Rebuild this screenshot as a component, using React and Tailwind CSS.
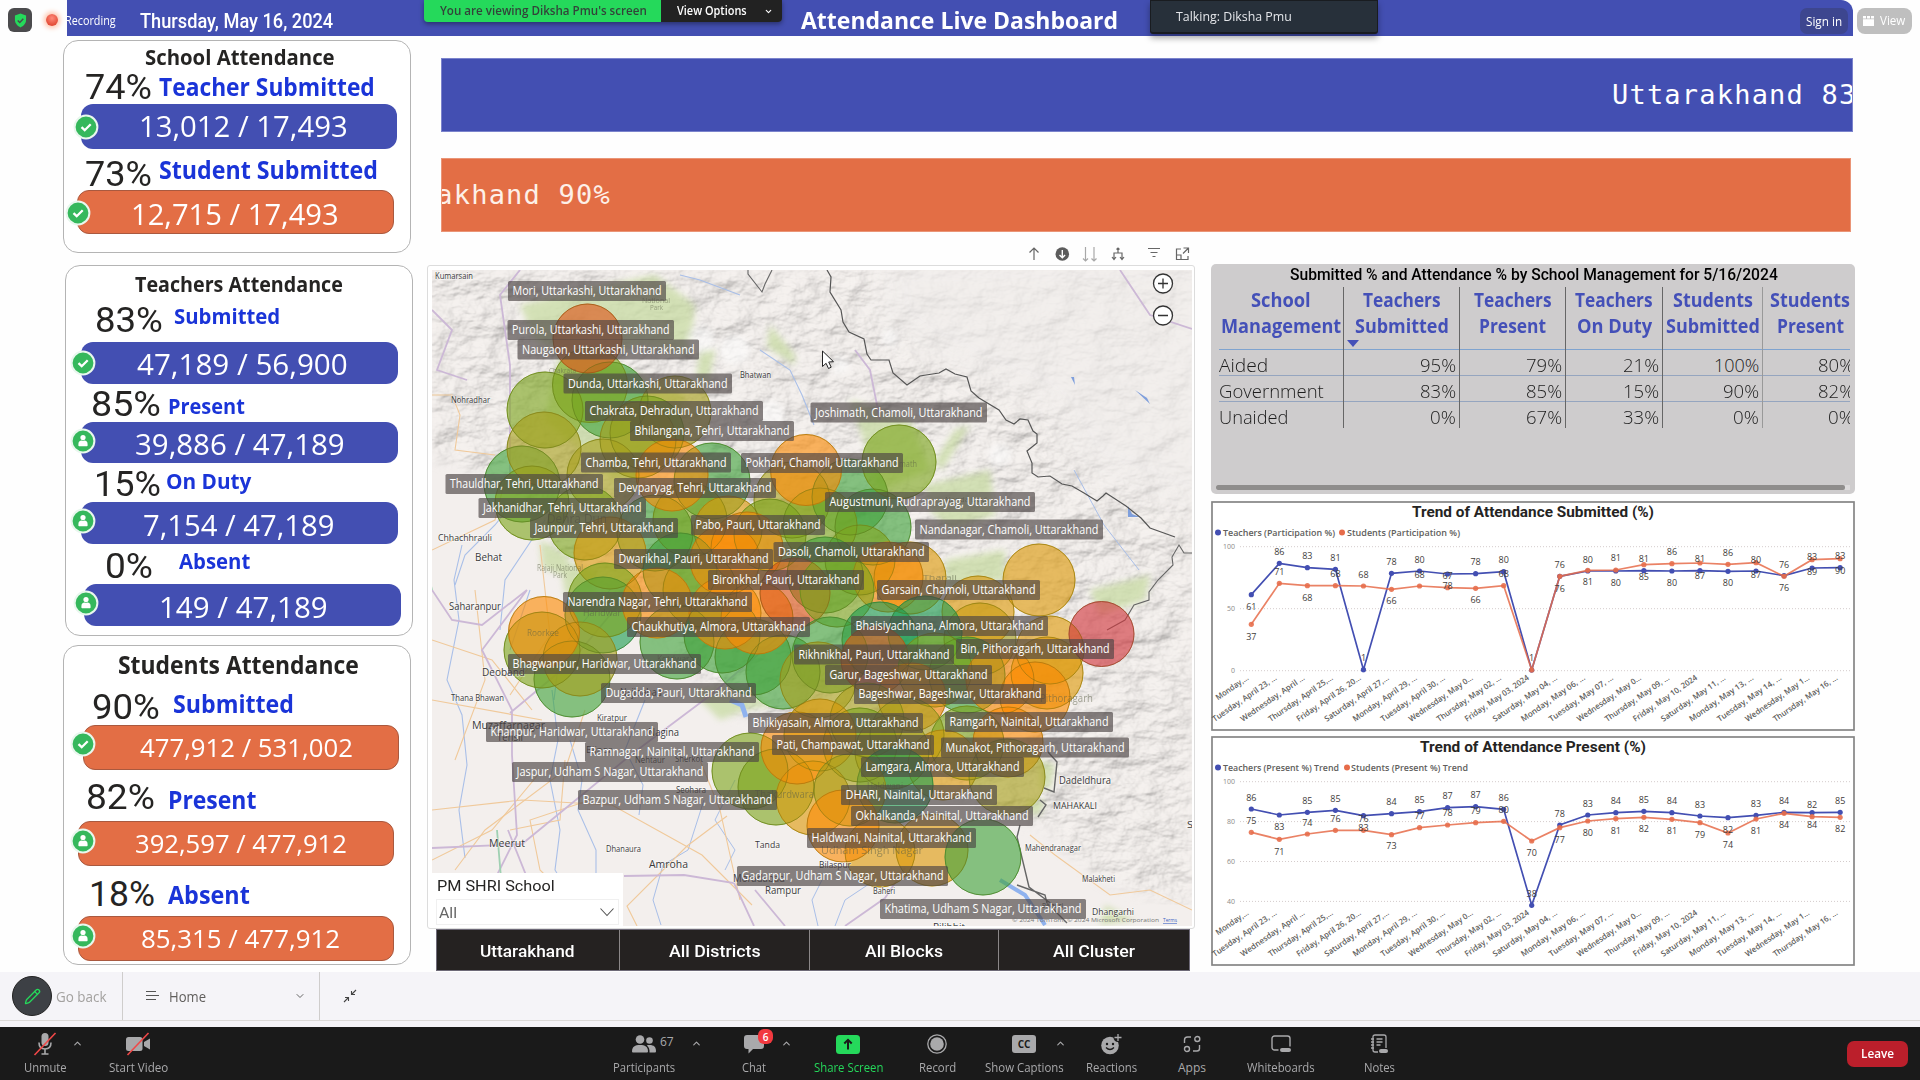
import React, { useLayoutEffect, useRef, useState } from "react";
import { ChevronDown, ChevronUp, Pencil } from "lucide-react";

const SANS = "font-['Open_Sans','Noto_Sans',sans-serif]";
const DIN = "font-['Roboto','Liberation_Sans',sans-serif]";

/* One line of text, squeezed or stretched to the width of its box. */
function Fit({ className = "", children }) {
  const box = useRef(null);
  const text = useRef(null);
  const [scale, setScale] = useState(1);
  useLayoutEffect(() => {
    setScale(box.current.clientWidth / text.current.offsetWidth);
  }, []);
  return (
    <div ref={box} className={`shrink-0 ${className}`}>
      <span ref={text} className="inline-block origin-left whitespace-nowrap" style={{ transform: `scaleX(${scale})` }}>
        {children}
      </span>
    </div>
  );
}

function Badge({ kind, className }) {
  return (
    <svg viewBox="0 0 26 26" className={`absolute h-[26px] w-[26px] ${className}`}>
      <circle cx="13" cy="13" r="11.4" fill="#35b85c" stroke="#e9f7ee" strokeWidth="2" />
      {kind === "check" ? (
        <path d="M8.5 13.2l3.2 3 6-6" fill="none" stroke="#fff" strokeWidth="2.3" />
      ) : (
        <g fill="#fff">
          <circle cx="13" cy="9.6" r="2.6" />
          <path d="M8.4 16.2q0-3.6 3.4-3.6 1.2.9 2.4 0 3.4 0 3.4 3.6v1.3q0 .7-.7.7H9.1q-.7 0-.7-.7z" />
        </g>
      )}
    </svg>
  );
}

function Metric({ m }) {
  return (
    <>
      <div className={`flex items-start ${m.row}`}>
        <Fit className={`${DIN} h-[25px] text-[35.5px] leading-[25px] text-[#252423] ${m.pctCls}`}>{m.pct}</Fit>
        <Fit className={`font-bold text-[#1a34d8] ${m.labelCls}`}>{m.label}</Fit>
      </div>
      <div className={`relative flex items-start rounded-[12px] ${m.bar}`}>
        <Fit className={`text-white ${m.valueCls}`}>{m.value}</Fit>
        <Badge kind={m.kind} className={m.badge} />
      </div>
    </>
  );
}

const BLUE = "bg-[#434fb2]";
const ORANGE = "bg-[#e36e45] border border-[#a9593f]";

const cards = [
  {
    cls: "h-[213px]",
    title: "School Attendance",
    titleCls: "ml-[81px] mt-[8px] h-[16px] w-[190px] text-[21.5px] leading-[16px]",
    metrics: [
      { pct: "74%", label: "Teacher Submitted", value: "13,012 / 17,493", kind: "check", row: "h-[39px]", pctCls: "ml-[21px] mt-[10px] w-[67px]", labelCls: "ml-[7px] mt-[12px] h-[18px] w-[216px] text-[25px] leading-[18px]", bar: `ml-[17px] h-[45px] w-[316px] ${BLUE}`, valueCls: "ml-[58px] mt-[11px] h-[22px] w-[209px] text-[30px] leading-[22px]", badge: "left-[-8px] top-[10px]" },
      { pct: "73%", label: "Student Submitted", value: "12,715 / 17,493", kind: "check", row: "h-[41px]", pctCls: "ml-[21px] mt-[13px] w-[67px]", labelCls: "ml-[7px] mt-[11px] h-[18px] w-[219px] text-[25px] leading-[18px]", bar: `ml-[13px] h-[44px] w-[317px] ${ORANGE}`, valueCls: "ml-[53px] mt-[12px] h-[22px] w-[208px] text-[30px] leading-[22px]", badge: "left-[-13px] top-[9px]" },
    ],
  },
  {
    cls: "ml-[2px] mt-[12px] h-[371px]",
    title: "Teachers Attendance",
    titleCls: "ml-[69px] mt-[10px] h-[16px] w-[208px] text-[21.5px] leading-[15px]",
    metrics: [
      { pct: "83%", label: "Submitted", value: "47,189 / 56,900", kind: "check", row: "h-[50px]", pctCls: "ml-[29px] mt-[16px] w-[68px]", labelCls: "ml-[11px] mt-[16px] h-[15px] w-[106px] text-[21.5px] leading-[15px]", bar: `ml-[15px] h-[42px] w-[317px] ${BLUE}`, valueCls: "ml-[56px] mt-[11px] h-[22px] w-[211px] text-[30px] leading-[22px]", badge: "left-[-11px] top-[8px]" },
      { pct: "85%", label: "Present", value: "39,886 / 47,189", kind: "user", row: "h-[38px]", pctCls: "ml-[25px] mt-[8px] w-[70px]", labelCls: "ml-[7px] mt-[14px] h-[15px] w-[77px] text-[21.5px] leading-[15px]", bar: `ml-[15px] h-[41px] w-[317px] ${BLUE}`, valueCls: "ml-[54px] mt-[11px] h-[22px] w-[210px] text-[30px] leading-[22px]", badge: "left-[-11px] top-[6px]" },
      { pct: "15%", label: "On Duty", value: "7,154 / 47,189", kind: "user", row: "h-[39px]", pctCls: "ml-[28px] mt-[9px] w-[67px]", labelCls: "ml-[5px] mt-[10px] h-[15px] w-[85px] text-[21.5px] leading-[15px]", bar: `ml-[15px] h-[42px] w-[317px] ${BLUE}`, valueCls: "ml-[62px] mt-[12px] h-[22px] w-[192px] text-[30px] leading-[22px]", badge: "left-[-11px] top-[6px]" },
      { pct: "0%", label: "Absent", value: "149 / 47,189", kind: "user", row: "h-[40px]", pctCls: "ml-[39px] mt-[10px] w-[48px]", labelCls: "ml-[26px] mt-[9px] h-[15px] w-[71px] text-[21.5px] leading-[15px]", bar: `ml-[18px] h-[42px] w-[317px] ${BLUE}`, valueCls: "ml-[75px] mt-[12px] h-[22px] w-[169px] text-[30px] leading-[22px]", badge: "left-[-11px] top-[6px]" },
    ],
  },
  {
    cls: "mt-[9px] h-[320px]",
    title: "Students Attendance",
    titleCls: "ml-[54px] mt-[10px] h-[18px] w-[241px] text-[24.5px] leading-[17px]",
    metrics: [
      { pct: "90%", label: "Submitted", value: "477,912 / 531,002", kind: "check", row: "h-[51px]", pctCls: "ml-[28px] mt-[21px] w-[68px]", labelCls: "ml-[13px] mt-[21px] h-[17px] w-[121px] text-[24.5px] leading-[17px]", bar: `ml-[19px] h-[45px] w-[316px] ${ORANGE}`, valueCls: "ml-[56px] mt-[12px] h-[18px] w-[213px] text-[26px] leading-[18px]", badge: "left-[-14px] top-[5px]" },
      { pct: "82%", label: "Present", value: "392,597 / 477,912", kind: "user", row: "h-[51px]", pctCls: "ml-[22px] mt-[15px] w-[69px]", labelCls: "ml-[13px] mt-[21px] h-[17px] w-[88px] text-[24.5px] leading-[17px]", bar: `ml-[14px] h-[45px] w-[316px] ${ORANGE}`, valueCls: "ml-[56px] mt-[12px] h-[18px] w-[212px] text-[26px] leading-[18px]", badge: "left-[-9px] top-[6px]" },
      { pct: "18%", label: "Absent", value: "85,315 / 477,912", kind: "user", row: "h-[50px]", pctCls: "ml-[25px] mt-[16px] w-[66px]", labelCls: "ml-[13px] mt-[20px] h-[17px] w-[82px] text-[24.5px] leading-[17px]", bar: `ml-[14px] h-[45px] w-[316px] ${ORANGE}`, valueCls: "ml-[62px] mt-[12px] h-[18px] w-[199px] text-[26px] leading-[18px]", badge: "left-[-9px] top-[6px]" },
    ],
  },
];

function Header() {
  return (
    <header className="flex h-[36px] shrink-0 items-start">
      <div className="flex w-[67px] items-start pl-[8px] pt-[8px]">
        <div className="flex h-[24px] w-[24px] items-center justify-center rounded-[6px] bg-[#4b4b4d]">
          <svg viewBox="0 0 14 16" className="h-[15px] w-[13px]">
            <path d="M7 .5l6 2v5c0 4-3 6.500-6 8-3-1.500-6-4-6-8v-5z" fill="#25d95b" />
            <path d="M4 8l2.200 2.200L10 6.200" fill="none" stroke="#4b4b4d" strokeWidth="1.500" />
          </svg>
        </div>
        <div className="ml-[14px] mt-[6px] h-[12px] w-[12px] rounded-full bg-[radial-gradient(circle_at_50%_35%,#ff8a7a,#d8341c)] shadow-[0_0_5px_2px_#ffc2a8]" />
      </div>
      <div className="flex h-[36px] w-[1786px] items-start rounded-tr-[12px] bg-[#434fb2] text-white">
        <Fit className="ml-[-2px] mt-[12px] h-[17px] w-[51px] text-[12.5px] leading-[17px]">Recording</Fit>
        <Fit className={`${DIN} ml-[24px] mt-[10px] h-[22px] w-[193px] text-[20px] font-medium leading-[22px]`}>Thursday, May 16, 2024</Fit>
        <div className="ml-[91px] flex h-[22px] w-[358px] overflow-hidden rounded-b-[4px] shadow-[0_2px_5px_rgba(0,0,0,.4)]">
          <div className="flex w-[237px] items-center bg-[#25d95b] pl-[16px] text-[#33433a]">
            <Fit className="w-[207px] text-[12.5px] font-semibold leading-[22px]">You are viewing Diksha Pmu's screen</Fit>
          </div>
          <div className="flex flex-1 items-center bg-[#222222] pl-[16px]">
            <Fit className="w-[70px] text-[12.5px] font-semibold leading-[22px]">View Options</Fit>
            <ChevronDown className="ml-[17px] h-[9px] w-[9px]" strokeWidth={3} />
          </div>
        </div>
        <Fit className="ml-[19px] mt-[9px] h-[22px] w-[317px] text-[24px] font-bold leading-[22px]">Attendance Live Dashboard</Fit>
        <div className="ml-[32px] flex h-[34px] w-[228px] items-center rounded-b-[3px] border border-b-2 border-[#191c20] bg-[#27303a] pl-[25px] shadow-[0_4px_6px_rgba(0,0,0,.35)]">
          <Fit className="w-[116px] text-[13px] text-[#e4e6ea]">Talking: Diksha Pmu</Fit>
        </div>
        <div className="ml-[422px] mt-[8px] flex h-[26px] w-[48px] items-center justify-center rounded-[7px] bg-[#3d468f]">
          <Fit className="w-[36px] text-[13px] leading-[24px]">Sign in</Fit>
        </div>
      </div>
      <div className="ml-[4px] mt-[8px] flex h-[26px] w-[55px] items-center rounded-[8px] bg-[#bfbfbf] pl-[6px] text-white">
        <svg viewBox="0 0 11 10" className="h-[10px] w-[11px]" fill="#fff">
          <path d="M0 0h3v2.500H0zM4 0h3v2.500H4zM8 0h3v2.500H8zM0 3.300h11V10H0z" />
        </svg>
        <Fit className="ml-[6px] w-[25px] text-[13px]">View</Fit>
      </div>
    </header>
  );
}

const C = { R: "#d1353c", r: "#dd5416", o: "#fb8a05", y: "#dd9a0a", g: "#a8a01c", v: "#7ea61f", n: "#41a33c", t: "#1c9c50" };

const bubbles = [
  [610, 400, 38, "n"], [590, 385, 37.5, "v"], [587.5, 338.5, 34.5, "r"], [545, 410, 38, "v"], [675, 412, 36, "g"], [522, 484, 38, "n"], [532, 503, 37, "v"], [544, 449, 37, "g"],
  [647, 433, 37, "v"], [638, 440, 38, "g"], [712, 481, 38, "n"], [603, 475, 36, "g"], [655, 533, 38, "n"], [585, 523, 37, "v"], [690, 520, 37, "v"], [672, 475, 36, "o"],
  [792, 500, 38, "g"], [850, 497, 38, "n"], [873, 527, 38, "n"], [820, 525, 37, "v"], [728, 530, 34, "y"], [770, 535, 36, "v"], [806, 470, 35.5, "o"], [899, 462, 37, "v"],
  [610, 553, 36, "y"], [680, 570, 37, "n"], [603, 615, 38, "t"], [605, 600, 37, "v"], [700, 590, 37, "v"], [747, 548, 36, "o"], [725, 560, 35, "o"], [860, 560, 35, "v"], [825, 575, 38, "n"],
  [677, 642, 37, "n"], [722, 635, 38, "n"], [657, 603, 35, "o"], [753, 657, 38, "n"], [783, 672, 37, "n"], [725, 613, 36, "o"], [757, 618, 36, "o"], [795, 593, 35, "r"],
  [910, 578, 36, "y"], [888, 577, 35, "o"], [837, 590, 37, "v"], [980, 639, 36, "g"], [978, 612, 36, "y"], [1039, 580, 36, "y"], [572, 679, 38, "n"], [542, 650, 38, "v"], [580, 659, 37, "g"], [544, 632, 35.5, "o"],
  [880, 640, 38, "t"], [925, 633, 37, "t"], [830, 655, 38, "n"], [967, 675, 38, "n"], [818, 680, 38, "g"], [875, 660, 34, "r"], [935, 670, 37, "v"], [1050, 650, 34, "y"], [1047, 673, 36, "y"],
  [1000, 680, 34, "o"], [1035, 697, 35, "o"], [912, 697, 34, "o"], [867, 720, 37, "g"], [907, 735, 37, "g"], [967, 743, 37, "v"], [1008, 742, 35, "o"], [860, 745, 37, "v"], [943, 765, 35, "y"],
  [892, 752, 37, "g"], [1007, 777, 38, "g"], [895, 785, 38, "t"], [750, 771, 38, "v"], [776, 787, 38, "v"], [813, 798, 37, "y"], [797, 748, 36, "o"], [820, 735, 36, "y"], [850, 790, 36, "g"],
  [932, 850, 36, "y"], [880, 852, 35, "y"], [983, 857, 38, "n"], [843, 826, 36, "o"], [1101.5, 634, 32.5, "R"],
];

const labels = [
  [508, 666, 291, "Mori, Uttarkashi, Uttarakhand"], [507.5, 674, 330, "Purola, Uttarkashi, Uttarakhand"], [517.5, 699, 349.5, "Naugaon, Uttarkashi, Uttarakhand"],
  [563.5, 732, 383.5, "Dunda, Uttarkashi, Uttarakhand"], [585, 763, 411, "Chakrata, Dehradun, Uttarakhand"], [630, 794, 431, "Bhilangana, Tehri, Uttarakhand"],
  [581, 731, 462.5, "Chamba, Tehri, Uttarakhand"], [741, 903, 463, "Pokhari, Chamoli, Uttarakhand"], [445.500, 603, 484, "Thauldhar, Tehri, Uttarakhand"],
  [614, 776, 488, "Devparyag, Tehri, Uttarakhand"], [478.500, 646, 508, "Jakhanidhar, Tehri, Uttarakhand"], [530, 678, 528, "Jaunpur, Tehri, Uttarakhand"],
  [691, 825, 525, "Pabo, Pauri, Uttarakhand"], [614, 773, 559, "Dwarikhal, Pauri, Uttarakhand"], [773.500, 929, 552, "Dasoli, Chamoli, Uttarakhand"],
  [708, 864, 580, "Bironkhal, Pauri, Uttarakhand"], [810.500, 987, 412.500, "Joshimath, Chamoli, Uttarakhand"], [825, 1035, 502, "Augustmuni, Rudraprayag, Uttarakhand"],
  [915, 1103, 529.5, "Nandanagar, Chamoli, Uttarakhand"], [877, 1040, 590, "Garsain, Chamoli, Uttarakhand"], [563, 752, 602, "Narendra Nagar, Tehri, Uttarakhand"],
  [627, 810, 627, "Chaukhutiya, Almora, Uttarakhand"], [851, 1048, 626, "Bhaisiyachhana, Almora, Uttarakhand"], [794, 954, 654.5, "Rikhnikhal, Pauri, Uttarakhand"],
  [956, 1114, 649, "Bin, Pithoragarh, Uttarakhand"], [508, 701, 664, "Bhagwanpur, Haridwar, Uttarakhand"], [825, 992, 675, "Garur, Bageshwar, Uttarakhand"],
  [854, 1046, 694, "Bageshwar, Bageshwar, Uttarakhand"], [601, 756, 693, "Dugadda, Pauri, Uttarakhand"], [486, 658, 732, "Khanpur, Haridwar, Uttarakhand"],
  [748, 923, 723, "Bhikiyasain, Almora, Uttarakhand"], [945, 1113, 722, "Ramgarh, Nainital, Uttarakhand"], [585, 759, 752, "Ramnagar, Nainital, Uttarakhand"],
  [772, 934, 745, "Pati, Champawat, Uttarakhand"], [941, 1129, 747.5, "Munakot, Pithoragarh, Uttarakhand"], [512, 708, 772, "Jaspur, Udham S Nagar, Uttarakhand"],
  [861, 1024, 767, "Lamgara, Almora, Uttarakhand"], [578, 777, 800, "Bazpur, Udham S Nagar, Uttarakhand"], [841, 997, 795, "DHARI, Nainital, Uttarakhand"],
  [851, 1033, 816, "Okhalkanda, Nainital, Uttarakhand"], [807, 976, 838, "Haldwani, Nainital, Uttarakhand"], [737, 948, 876, "Gadarpur, Udham S Nagar, Uttarakhand"],
  [880, 1086, 909, "Khatima, Udham S Nagar, Uttarakhand"],
];

const places = [
  [435, 279, 38, 8.5, "Kumarsain"], [740, 378, 31, 8.5, "Bhatwan"], [451, 403, 39, 8.5, "Nohradhar"], [438, 541, 54, 9, "Chhachhrauli"], [475, 560.500, 27, 10.5, "Behat"],
  [449, 609.500, 52, 10.5, "Saharanpur"], [482, 675.500, 43, 10.5, "Deoband"], [451, 701, 53, 9, "Thana Bhawan"], [472, 728.500, 73, 11, "Muzaffarnagar"], [497, 741, 26, 11, "Tehsil"],
  [597, 721, 30, 8.5, "Kiratpur"], [648, 736, 31, 11, "Nagina"], [586, 753, 26, 9, "Bijnor"], [635, 763, 30, 8.5, "Nehtaur"], [675, 762, 28, 8.5, "Sherkot"], [676, 792.500, 30, 8.5, "Seohara"],
  [489, 847, 36, 11.5, "Meerut"], [606, 852, 35, 9, "Dhanaura"], [649, 868, 39, 11.5, "Amroha"], [755, 848, 25, 9.5, "Tanda"], [733, 882, 52, 11, "Moradabad"], [765, 894, 36, 10, "Rampur"],
  [819, 868, 32, 8.5, "Bilaspur"], [873, 894, 22, 8.5, "Baheri"], [1059, 784, 52, 10, "Dadeldhura"], [1053, 809, 44, 9, "MAHAKALI"], [1025, 851, 56, 8.5, "Mahendranagar"],
  [1082, 882, 33, 8.5, "Malakheti"], [1092, 915, 42, 9.5, "Dhangarhi"], [1187, 828, 6, 9, "S"], [1042, 908, 21, 8, "Belauri"], [933, 930, 32, 9, "Pilibhit"], [620, 696, 42, 10.5, "Najibabad"],
];

const faintPlaces = [
  [642, 303, 28, 8, "National"], [650, 310, 13, 8, "Park"], [549, 373, 27, 7.5, "Chakrata"], [547, 523, 60, 13, "Dehra Dun"], [537, 571, 46, 8.5, "Rajaji National"], [553, 578, 14, 8.5, "Park"],
  [527, 636, 32, 9, "Roorkee"], [583, 616, 38, 9, "Haridwar"], [657, 662, 37, 9, "Kotdwara"], [899, 467, 18, 9, "math"], [945, 502, 42, 8, "Nanda Devi"], [923, 580, 34, 8, "Tharali"],
  [1040, 702, 53, 11, "Pithoragarh"], [755, 798, 59, 11, "Thakurdwara"], [821, 854, 102, 11, "Udham Singh Nagar"], [867, 789, 36, 8.5, "Haldwani"],
];

function BubbleMap() {
  return (
    <svg viewBox="432 270 760 656" width="760" height="656" className="block">
      <defs>
        <filter id="relief" x="0" y="0" width="100%" height="100%">
          <feTurbulence type="fractalNoise" baseFrequency="0.026 0.042" numOctaves="5" seed="11" result="noise" />
          <feDiffuseLighting in="noise" surfaceScale="8" lightingColor="#f8f4f1" result="lit">
            <feDistantLight azimuth="225" elevation="60" />
          </feDiffuseLighting>
          <feGaussianBlur in="SourceAlpha" stdDeviation="7" result="mask" />
          <feComposite in="lit" in2="mask" operator="in" />
        </filter>
        <filter id="soft"><feGaussianBlur stdDeviation="3" /></filter>
        <filter id="edge"><feGaussianBlur stdDeviation="14" /></filter>
        <clipPath id="frame"><rect x="432" y="270" width="760" height="656" /></clipPath>
      </defs>
      <g clipPath="url(#frame)">
        <rect x="432" y="270" width="760" height="656" fill="#f3efed" />
        <path filter="url(#relief)" opacity=".55" d="M432 270H1192V905L1105 880 1040 825 990 810 830 730 740 715 660 640 560 560 500 480 432 455z" />
        <path d="M880 250H1220V525L1080 470 1050 410 970 375 910 345 880 320z" fill="#f1eeec" opacity=".65" filter="url(#edge)" />
        <g fill="#c9dca4" opacity=".75" filter="url(#soft)">
          <path d="M520 305l60-15 75-15 40 30-5 50-50-10-60 15-45-20z" />
          <path d="M770 325l25 30 0 10-28-18zM700 350l15 0-8 40-12-5zM560 560l35 10 0 22-30 3zM540 540l30 15-10 20-18-8z" />
          <path d="M955 430l15-5-28 45-8-8zM925 485l65-15 5 45-45 15-20-20zM945 560l60-10 0 30-60 10zM1090 590l60-15-5 25-45 15z" />
          <path d="M690 690l45-5 40 20-30 5-25 10zM1040 760l15 5-5 25-10-2zM1030 800l15 0-5 15-15-2zM1105 905l30 15-35 5z" />
          <path d="M560 350l55 15 70 30-20 70-50 15-70-60z" /><path d="M850 400l60 20 20 50-50 20z" />
        </g>
        <g fill="#fff" opacity=".55" filter="url(#soft)">
          <circle cx="700" cy="340" r="14" /><circle cx="735" cy="350" r="15" /><circle cx="840" cy="365" r="9" /><circle cx="770" cy="415" r="14" /><circle cx="890" cy="338" r="8" /><circle cx="1000" cy="455" r="11" />
        </g>
        <g fill="none" stroke="#a9bfe8" strokeWidth="1.100">
          <path d="M680 275l20 5 40 15M760 350l30 20 12 25 12 30M515 500l-20 25-30 30-10 30M545 520l-40 60-5 50M462 545l-8 35 5 40-12 60 15 35 5 50-8 45 6 48" />
          <path d="M552 690l6 50-8 40 10 50-5 40 18 30-2 30M570 740l12 40-4 30 18 40 0 40 20 34M530 590l-20 60M610 590l-50 60-6 50M645 700l-20 50 18 35-4 30" />
          <path d="M735 780l-20 40 20 30-10 20M704 800l-16 50-25 15-10 35 8 25M875 880l-30 20-10 26M822 880l-10 20 6 26M1074 470l30 55 35 45" strokeWidth="1" />
          <path d="M1000 880l25 15 20 30" stroke="#8fb2ee" strokeWidth="4" /><path d="M730 700l12 5 4 12" stroke="#8fb2ee" strokeWidth="5" />
        </g>
        <path d="M1071 377l3 0 1 8zM1135 390l12 8 3 6zM1128 506l4 8 8 3-12 0z" fill="#7f9fdc" />
        <g fill="none" stroke="#f0c99a" strokeWidth="1.100">
          <path d="M432 395h20l8 20-5 35 40 5M505 480l-10 40-63 30M475 590l10 90-30 80M432 640l60 20 40 50M432 810l90-10 90 5 90 50 50 50M510 830l50-10 5-60M540 545l10 90-40 60M700 760l20 50 20 90M432 860l60-30 50-60M637 926l-10-20 60-60 40-30M1030 835l25 20 55 40 40-5 42 20" />
          <path d="M432 700l110 20M590 800l-60 20 10 50 40 40M455 870l30-40 80-60 20-60" />
        </g>
        <g fill="none" stroke="#ccb8d6" strokeWidth="1.800">
          <path d="M432 590l20 30 30 5 45-35M527 590l-45 60 30 60 0 45 5 80-20 40-6 51M432 848l90-4 110-90 80-60 70-60M508 830l20 50 30 46M624 876l60-1 50 8 20 43M510 713l60-50 50-60M755 890l30 36M905 868l-20 30-40 28M432 310l20 20-15 40 30 10M520 270l-20 25 10 70 0 110M855 350l15 20 10 50M1120 270l30 45 42 14" />
          <path d="M432 590l-5-20M497 830l5 60 12 36" stroke="#9fd0b2" />
        </g>
        <path d="M827 270l4 7-1 15 11 18 2 12 6 10 15 7 3 15 4 6 18 0 4 13 14 12 13-9 6-1 13-2 7-4 9 5 12 3 4 14 8 7 20 12 7 10 8 4 6-5 8 1 5 11 4 3 0 9-10 8 5 12 0 10 6 4 12-1 12 8 10 2 12 7 13 8 6-5 3-3 20 13 15 12 9 10 25 9" fill="none" stroke="#555" strokeWidth="1.200" />
        <path d="M748 270l0 4 14 18 3-8 7-14M1192 553l-8 0-5-8-7 12 1 8-15 15-9 12 0 8-15 5-9 15-18 10" fill="none" stroke="#666" strokeWidth="1.100" />
        <path d="M1048 752l9 10-3 30-10-4M1040 800l6 5-8 12M1020 825l-3 12 12 50 24 18M1017 885l28 10 2 8 20 20" fill="none" stroke="#666" strokeWidth="1.400" />
        {bubbles.map(([x, y, r, c], i) => (
          <circle key={i} cx={x} cy={y} r={r} fill={C[c]} fillOpacity=".62" stroke={C[c]} strokeOpacity=".9" strokeWidth="1" />
        ))}
        <g fill="none" stroke="#5d6a1c" strokeOpacity=".4" strokeWidth="1">
          {bubbles.map(([x, y, r], i) => <circle key={i} cx={x} cy={y} r={r} />)}
        </g>
        <g className={SANS}>
          {faintPlaces.map(([x, y, w, s, t]) => (
            <text key={t + x + y} x={x} y={y} fontSize={s} textLength={w} lengthAdjust="spacingAndGlyphs" fill="#5a5f46" opacity=".55">{t}</text>
          ))}
          {places.map(([x, y, w, s, t]) => (
            <text key={t} x={x} y={y} fontSize={s} textLength={w} lengthAdjust="spacingAndGlyphs" fill="#3a3a3a" stroke="#fff" strokeWidth="1.500" strokeOpacity=".5" paintOrder="stroke">{t}</text>
          ))}
          {labels.map(([x1, x2, y, t]) => (
            <g key={t}>
              <rect x={x1} y={y - 10} width={x2 - x1} height="20" rx="1.500" fill="#4c4544" fillOpacity=".66" />
              <text x={x1 + 4.5} y={y + 4} fontSize="12" textLength={x2 - x1 - 9} lengthAdjust="spacingAndGlyphs" fill="#fff">{t}</text>
            </g>
          ))}
          <text x="1012" y="922" fontSize="6" textLength="147" lengthAdjust="spacingAndGlyphs" fill="#777">© 2024 TomTom, © 2024 Microsoft Corporation</text>
          <text x="1163" y="922" fontSize="6" textLength="14" lengthAdjust="spacingAndGlyphs" fill="#3c62c4" textDecoration="underline">Terms</text>
        </g>
        <g fill="#fff" stroke="#333" strokeWidth="1.300">
          <circle cx="1163" cy="283.500" r="9.500" /><circle cx="1163" cy="315.500" r="9.500" />
          <path d="M1158 283.500h10M1163 278.500v10M1158 315.500h10" />
        </g>
        <path d="M822.500 351v15.500l3.600-3.200 2.400 5.200 2.700-1.300-2.500-5.200 4.800-.3z" fill="#fff" stroke="#222" strokeWidth="1" />
      </g>
    </svg>
  );
}

function MapTools() {
  return (
    <svg viewBox="1020 244 180 20" width="180" height="20" fill="none" stroke="#666" strokeWidth="1.200">
      <path d="M1034 260v-12M1029.500 252.500l4.500-4.500 4.500 4.500" />
      <circle cx="1062.300" cy="254" r="6.800" fill="#5c5c5c" stroke="none" />
      <path d="M1062.300 250v7.500M1059.500 255l2.800 2.800 2.800-2.800" stroke="#fff" strokeWidth="1.400" />
      <path d="M1085.500 247v14M1083 258.500l2.500 2.500 2.500-2.500M1094 247v14M1091.500 258.500l2.500 2.500 2.500-2.500" stroke="#a8a8a8" />
      <path d="M1118 248v5M1114 259v-6h8v6M1112 257l2 2.500 2-2.500M1120 257l2 2.500 2-2.500M1116.500 249.500l1.500-1.500 1.500 1.500" />
      <path d="M1148 248.500h12M1150.500 252.500h7M1152.500 256.500h3" />
      <path d="M1181 249h-4.500v10.500h11.500V256M1183.500 248h5v5M1188.500 248l-5.500 5.500M1176.500 255h4.500v4.500" />
    </svg>
  );
}

const scopes = [
  ["Uttarakhand", "w-[182px]", "w-[95px]"],
  ["All Districts", "w-[190px] border-l border-[#8b8788]", "w-[91px]"],
  ["All Blocks", "w-[190px] border-l border-[#8b8788]", "w-[78px]"],
  ["All Cluster", "w-[191px] border-l border-[#8b8788]", "w-[82px]"],
];

function MapColumn() {
  return (
    <section className="flex w-[768px] flex-col">
      <div className="flex h-[33px] items-start justify-end pt-[12px]">
        <div className="-mr-[5px]"><MapTools /></div>
      </div>
      <div className="relative h-[664px] w-[768px] rounded-[3px] border border-[#dcdcdc] bg-white pl-[4px] pt-[4px]">
        <BubbleMap />
        <div className="absolute left-[4px] top-[607px] h-[55px] w-[191px] bg-white pl-[4px] pt-[4px]">
          <Fit className={`${DIN} ml-[1px] w-[118px] text-[15px] leading-[18px] text-[#252423]`}>PM SHRI School</Fit>
          <div className="mt-[4px] flex h-[26px] w-[183px] items-center justify-between border border-[#f0f0f0] px-[2px]">
            <Fit className={`${DIN} mt-[3px] w-[18px] text-[15px] text-[#666]`}>All</Fit>
            <svg viewBox="0 0 16 10" className="mr-[1px] h-[10px] w-[16px]"><path d="M1.500 1.500L8 8.500 14.500 1.500" fill="none" stroke="#555" strokeWidth="1.100" /></svg>
          </div>
        </div>
      </div>
      <div className="ml-[9px] flex h-[42px] w-[754px] border border-[#6e6a78] bg-[#252221]">
        {scopes.map(([t, box, w]) => (
          <div key={t} className={`flex shrink items-center justify-center pt-[4px] ${box}`}>
            <Fit className={`${DIN} ${w} text-[16px] font-medium text-white`}>{t}</Fit>
          </div>
        ))}
      </div>
    </section>
  );
}

const columns = [
  ["School", "Management", "w-[60px]", "w-[120px]", ["Aided", "Government", "Unaided"], "w-[127px] pl-[3px] items-center", ["w-[49px]", "w-[105px]", "w-[70px]"]],
  ["Teachers", "Submitted", "w-[78px]", "w-[94px]", ["95%", "83%", "0%"], "w-[116px] border-l border-[#666]", ["w-[36px]", "w-[36px]", "w-[26px]"]],
  ["Teachers", "Present", "w-[78px]", "w-[67px]", ["79%", "85%", "67%"], "w-[106px] border-l border-[#666]", ["w-[36px]", "w-[36px]", "w-[36px]"]],
  ["Teachers", "On Duty", "w-[78px]", "w-[75px]", ["21%", "15%", "33%"], "w-[97px] border-l border-[#666]", ["w-[36px]", "w-[36px]", "w-[36px]"]],
  ["Students", "Submitted", "w-[80px]", "w-[94px]", ["100%", "90%", "0%"], "w-[100px] border-l border-[#666]", ["w-[45px]", "w-[36px]", "w-[26px]"]],
  ["Students", "Present", "w-[80px]", "w-[67px]", ["80%", "82%", "0%"], "w-[95px] border-l border-[#999]", ["w-[36px]", "w-[36px]", "w-[26px]"]],
];

function ManagementTable() {
  return (
    <div className="flex h-[230px] w-[644px] flex-col rounded-[5px] bg-[#cecccd] pl-[5px] pt-[4px]">
      <Fit className={`${DIN} ml-[74px] h-[15px] w-[488px] text-[16px] font-medium leading-[14px] text-black`}>Submitted % and Attendance % by School Management for 5/16/2024</Fit>
      <div className="relative mt-[4px] flex h-[141px] w-[634px] overflow-hidden">
        {columns.map(([a, b, wa, wb, rows, box, ws], i) => (
          <div key={i} className={`flex h-[141px] shrink-0 flex-col ${box}`}>
            <div className="flex h-[64px] w-full flex-col items-center border-b border-[#7fa3cf] text-[19.500px] font-bold leading-[26px] text-[#4450b8]">
              <Fit className={wa}>{a}</Fit>
              <Fit className={wb}>{b}</Fit>
            </div>
            {rows.map((v, r) => (
              <div key={r} className={`flex h-[26px] w-full items-center pt-[4px] text-[18px] font-light leading-[22px] text-[#1d1d1d] ${r < 2 ? "border-b border-[#95a5bf]" : ""} ${i ? "justify-end pr-[3px]" : "justify-start"}`}>
                <Fit className={ws[r]}>{v}</Fit>
              </div>
            ))}
          </div>
        ))}
        <div className="absolute left-[131px] top-[53px] h-0 w-0 border-x-[6.500px] border-t-[7px] border-x-transparent border-t-[#4450b8]" />
      </div>
      <div className="mt-[57px] h-[5px] w-[634px] bg-[#dddbdc]"><div className="h-[5px] w-[629px] rounded-[2px] bg-[#8f8d8c]" /></div>
    </div>
  );
}

const days = ["Monday,...", "Tuesday, April 23, ...", "Wednesday, April ...", "Thursday, April 25,...", "Friday, April 26, 20...", "Saturday, April 27,...", "Monday, April 29, ...", "Tuesday, April 30, ...", "Wednesday, May 0...", "Thursday, May 02, ...", "Friday, May 03, 2024", "Saturday, May 04, ...", "Monday, May 06, ...", "Tuesday, May 07, ...", "Wednesday, May 0...", "Thursday, May 09, ...", "Friday, May 10, 2024", "Saturday, May 11, ...", "Monday, May 13, ...", "Tuesday, May 14, ...", "Wednesday, May 1...", "Thursday, May 16, ..."];

const submitted = {
  title: "Trend of Attendance Submitted (%)", titleBox: [212, 242],
  legend: [["Teachers (Participation %)", 23, 112], ["Students (Participation %)", 147, 113]],
  dots: [18, 142],
  ticks: [["100", 51.7], ["50", 113.7], ["0", 175.7]],
  blue: [299, 205, 218, 223, 524, 235, 228, 237, 236, 230, 525, 244, 228, 228, 227, 228, 227, 229, 228, 242, 219, 218],
  orange: [388, 265, 272, 272, 273, 283, 273, 278, 280, 272, 525, 244, 226, 225, 209, 206, 204, 208, 203, 244, 194, 191],
  marks: [[0, 61, 335], [0, 37, 425], [1, 86, 171], [1, 71, 231], [2, 83, 182], [2, 68, 308], [3, 81, 188], [3, 68, 236], [4, 68, 239], [4, 1, 487], [5, 78, 200], [5, 66, 317], [6, 80, 194], [6, 68, 239], [7, 67, 242], [7, 78, 272], [8, 78, 200], [8, 66, 314], [9, 80, 194], [9, 68, 236], [10, 1, 487], [11, 76, 209], [11, 76, 281], [12, 80, 194], [12, 81, 261], [13, 81, 188], [13, 80, 263], [14, 81, 191], [14, 85, 245], [15, 86, 170], [15, 80, 263], [16, 81, 191], [16, 87, 242], [17, 86, 173], [17, 80, 263], [18, 80, 194], [18, 87, 240], [19, 76, 209], [19, 76, 278], [20, 83, 185], [20, 89, 231], [21, 83, 182], [21, 90, 227]],
};

const present = {
  title: "Trend of Attendance Present (%)", titleBox: [220, 226],
  legend: [["Teachers (Present %) Trend", 23, 116], ["Students (Present %) Trend", 151, 117]],
  dots: [18, 147],
  ticks: [["100", 51.7], ["80", 91.6], ["60", 131.5], ["40", 171.4]],
  blue: [237, 255, 247, 241, 257, 251, 245, 233, 230, 238, 526, 285, 255, 248, 244, 248, 258, 263, 256, 247, 248, 247],
  orange: [307, 328, 312, 301, 301, 314, 293, 285, 278, 274, 333, 293, 273, 266, 262, 268, 278, 309, 267, 250, 260, 262],
  marks: [[0, 86, 203], [0, 75, 272], [1, 83, 290], [1, 71, 365], [2, 85, 212], [2, 74, 277], [3, 85, 206], [3, 76, 266], [4, 76, 266], [4, 83, 293], [5, 84, 215], [5, 73, 347], [6, 85, 209], [6, 77, 257], [7, 87, 197], [7, 78, 248], [8, 87, 194], [8, 79, 242], [9, 86, 203], [9, 80, 239], [10, 38, 490], [10, 70, 368], [11, 78, 251], [11, 77, 329], [12, 83, 221], [12, 80, 307], [13, 84, 212], [13, 81, 302], [14, 85, 209], [14, 82, 296], [15, 84, 212], [15, 81, 302], [16, 83, 223], [16, 79, 314], [17, 82, 299], [17, 74, 344], [18, 83, 221], [18, 81, 302], [19, 84, 212], [19, 84, 284], [20, 82, 224], [20, 84, 284], [21, 85, 212], [21, 82, 296]],
};

const px = (i) => 51.3 + i * 28.04;

function Trend({ d }) {
  const line = (ys) => ys.map((y, i) => `${px(i)},${y / 3}`).join(" ");
  return (
    <svg viewBox="11 6 644 230" width="644" height="230" className={`${SANS} block`}>
      <rect x="12" y="7" width="642" height="228" fill="#fff" stroke="#858585" strokeWidth="1.700" />
      <text x={d.titleBox[0]} y="21.500" fontSize="15" className={DIN} fontWeight="700" fill="#252423" textLength={d.titleBox[1]} lengthAdjust="spacingAndGlyphs">{d.title}</text>
      {d.legend.map(([t, x, w], i) => (
        <g key={t}>
          <circle cx={d.dots[i]} cy="37.500" r="3" fill={i ? "#e66c4a" : "#434fb2"} />
          <text x={x} y="40.500" fontSize="8.800" fontWeight="600" fill="#605e5c" textLength={w} lengthAdjust="spacingAndGlyphs">{t}</text>
        </g>
      ))}
      {d.ticks.map(([t, y]) => (
        <g key={t}>
          <path d={`M40 ${y}H652`} stroke="#d4cccc" strokeWidth="1" strokeDasharray="1 2" />
          <text x="35" y={y + 2.500} fontSize="7" textAnchor="end" fill="#8c8a88">{t}</text>
        </g>
      ))}
      <polyline points={line(d.blue)} fill="none" stroke="#434fb2" strokeWidth="1.700" />
      {d.blue.map((y, i) => <circle key={i} cx={px(i)} cy={y / 3} r="2.600" fill="#434fb2" />)}
      <polyline points={line(d.orange)} fill="none" stroke="#e66c4a" strokeWidth="1.700" strokeOpacity=".85" />
      {d.orange.map((y, i) => <circle key={i} cx={px(i)} cy={y / 3} r="2.600" fill="#e66c4a" fillOpacity=".88" />)}
      {d.marks.map(([i, v, y], k) => (
        <text key={k} x={px(i)} y={y / 3 + 3.200} fontSize="9" textAnchor="middle" fontWeight="500" fill="#3f3d3b">{v}</text>
      ))}
      {days.map((t, i) => (
        <text key={i} transform={`translate(${px(i) - 2} 184) rotate(-34.500)`} textAnchor="end" fontSize="8" fontWeight="600" fill="#605e5c" textLength={i ? 76 : 38} lengthAdjust="spacingAndGlyphs">{t}</text>
      ))}
    </svg>
  );
}

function ReportNav() {
  return (
    <div className="flex h-[55px] shrink-0 flex-col bg-[#f5f4f8] text-[15px]">
      <div className="flex h-[49px] items-stretch border-b border-[#dcdad8]">
        <div className="flex w-[123px] items-center border-r border-[#cfcdcc] pl-[12px]">
          <div className="flex h-[40px] w-[40px] items-center justify-center rounded-full border border-[#222] bg-[#3d4045]">
            <Pencil className="h-[17px] w-[17px] text-[#25d95b]" strokeWidth={1.8} />
          </div>
          <Fit className="ml-[4px] mt-[2px] w-[51px] text-[14.500px] text-[#a3a19f]">Go back</Fit>
        </div>
        <div className="flex w-[197px] items-center border-r border-[#cfcdcc] pl-[23px]">
          <svg viewBox="0 0 14 12" className="h-[12px] w-[14px]" stroke="#555" strokeWidth="1.100"><path d="M0 1.500h10M0 5.500h13M0 9.500h10" /></svg>
          <Fit className="ml-[9px] mt-[2px] w-[37px] text-[14.500px] text-[#605e5c]">Home</Fit>
          <ChevronDown className="ml-[88px] h-[12px] w-[12px] text-[#666]" strokeWidth={2} />
        </div>
        <div className="flex items-center pl-[23px]">
          <svg viewBox="0 0 14 14" className="h-[14px] w-[14px]" fill="none" stroke="#444" strokeWidth="1.100"><path d="M13 1L8.500 5.500M8.500 2v3.500H12M1 13l4.500-4.500M2 8.500h3.500V12" /></svg>
        </div>
      </div>
    </div>
  );
}

const G = "#a9a9ab";
const tools = [
  { label: "Participants", box: "ml-[432px] w-[76px]", w: "w-[62px]", icon: <svg viewBox="0 0 26 22" width="26" height="22" fill={G}><circle cx="9" cy="6.500" r="4.300" /><path d="M1 18.500c0-5 3-6.500 8-6.500s8 1.500 8 6.500q0 1-1 1H2q-1 0-1-1z" /><circle cx="18.500" cy="7.500" r="3.300" /><path d="M18.500 12c4.500 0 6.500 2 6.500 6 0 1-.5 1.500-1.300 1.500H18.500c.3-3.500-.8-5.500-2.700-7 .8-.4 1.700-.5 2.700-.5z" /></svg>, extra: "67", caret: "left-[85px]" },
  { label: "Chat", box: "ml-[50px] w-[44px]", w: "w-[24px]", icon: <svg viewBox="0 0 22 20" width="22" height="20" fill={G}><path d="M4 1h14q3 0 3 3v8q0 3-3 3h-8l-4.500 4.500V15H4q-3 0-3-3V4q0-3 3-3z" /></svg>, badge: "6", caret: "left-[49px]" },
  { label: "Share Screen", box: "ml-[32px] w-[80px]", w: "w-[69px]", green: true, icon: <svg viewBox="0 0 24 19" width="24" height="19"><rect width="24" height="19" rx="3.500" fill="#25d95b" /><path d="M12 14.500V5M8.300 8.500L12 4.800l3.700 3.700" fill="none" stroke="#1a1a1a" strokeWidth="2" /></svg> },
  { label: "Record", box: "ml-[24px] w-[50px]", w: "w-[37px]", icon: <svg viewBox="0 0 20 20" width="20" height="20"><circle cx="10" cy="10" r="9.200" fill="none" stroke={G} strokeWidth="1.300" /><circle cx="10" cy="10" r="6.800" fill={G} /></svg> },
  { label: "Show Captions", box: "ml-[18px] w-[88px]", w: "w-[79px]", icon: <div className="flex h-[18px] w-[24px] items-center justify-center rounded-[3px] bg-[#a9a9ab] text-[10px] font-bold leading-none text-[#1a1a1a]">CC</div>, caret: "left-[75px]" },
  { label: "Reactions", box: "ml-[13px] w-[60px]", w: "w-[51px]", icon: <svg viewBox="0 0 22 22" width="22" height="22"><circle cx="10" cy="12.500" r="8.800" fill={G} /><circle cx="7" cy="11" r="1.200" fill="#1a1a1a" /><circle cx="13" cy="11" r="1.200" fill="#1a1a1a" /><path d="M6 14.500q4 4 8 0" fill="none" stroke="#1a1a1a" strokeWidth="1.300" /><circle cx="18" cy="4.500" r="4.500" fill="#1a1a1a" /><path d="M18 1v7M14.500 4.500h7" stroke={G} strokeWidth="1.300" /></svg> },
  { label: "Apps", box: "ml-[31px] w-[40px]", w: "w-[28px]", icon: <svg viewBox="0 0 18 18" width="18" height="18" fill="none" stroke={G} strokeWidth="1.400"><path d="M1.500 8V5Q1.500 2 4.500 2H8M16.500 10v3.500q0 2.500-2.500 2.500h-4" /><circle cx="14.300" cy="4" r="2.500" /><circle cx="4" cy="14" r="2.500" /></svg> },
  { label: "Whiteboards", box: "ml-[29px] w-[80px]", w: "w-[68px]", icon: <svg viewBox="0 0 20 18" width="20" height="18"><rect x="1" y="1" width="18" height="14" rx="2.500" fill="none" stroke={G} strokeWidth="1.400" /><rect x="7.500" y="11.500" width="13" height="7" fill="#1a1a1a" /><rect x="9" y="13" width="11" height="4" rx="2" fill={G} /></svg> },
  { label: "Notes", box: "ml-[38px] w-[40px]", w: "w-[31px]", icon: <svg viewBox="0 0 18 20" width="18" height="20" fill="none" stroke={G} strokeWidth="1.300"><path d="M3 3q0-2 2-2h9q2 0 2 2v11M3 3v13q0 2 2 2h3M6.500 5h6M6.500 8h6M6.500 11h4M1 5h3M1 8h3M1 11h3M1 14h3" /><rect x="9" y="15" width="9" height="4" rx="2" fill={G} stroke="none" /></svg> },
];

function Tool({ t }) {
  return (
    <div className={`relative flex shrink-0 flex-col items-center ${t.box}`}>
      <div className="relative flex h-[34px] items-center justify-center">
        {t.icon}
        {t.badge && <div className="absolute -right-[8px] top-[2px] flex h-[15px] w-[15px] items-center justify-center rounded-[6px] bg-[#f2393f] text-[10px] font-semibold leading-none text-white">{t.badge}</div>}
        {t.extra && <div className="absolute left-[29px] top-[7px] text-[12px] leading-[16px]">{t.extra}</div>}
      </div>
      <Fit className={`${t.w} text-[12px] leading-[13px] ${t.green ? "text-[#25d95b]" : ""}`}>{t.label}</Fit>
      {t.caret && <ChevronUp className={`absolute top-[11px] h-[11px] w-[11px] ${t.caret}`} strokeWidth={2.5} />}
    </div>
  );
}

function MeetingBar() {
  return (
    <footer className="flex h-[53px] shrink-0 items-start bg-[#1a1a1a] text-[#a9a9ab]">
      <div className="relative ml-[15px] flex w-[60px] flex-col items-center">
        <div className="flex h-[34px] items-center">
          <svg viewBox="0 0 24 24" width="24" height="24"><rect x="8.500" y="1" width="7" height="13" rx="3.500" fill={G} /><path d="M6 10.500q0 6.500 6 6.500t6-6.500M12 17v4.500M8.500 22h7" fill="none" stroke={G} strokeWidth="1.600" /><path d="M1.500 23L22.500 1" stroke="#f04848" strokeWidth="1.600" /></svg>
        </div>
        <Fit className="w-[43px] text-[12px] leading-[13px]">Unmute</Fit>
        <ChevronUp className="absolute left-[57px] top-[11px] h-[11px] w-[11px]" strokeWidth={2.5} />
      </div>
      <div className="ml-[27px] flex w-[72px] flex-col items-center">
        <div className="flex h-[34px] items-center">
          <svg viewBox="0 0 24 24" width="24" height="24"><rect x="0" y="5" width="16.500" height="14" rx="2.500" fill={G} /><path d="M18 10l6-3.500v11L18 14z" fill={G} /><path d="M1.500 23L22.500 1" stroke="#f04848" strokeWidth="1.600" /></svg>
        </div>
        <Fit className="w-[59px] text-[12px] leading-[13px]">Start Video</Fit>
      </div>
      {tools.map((t) => <Tool key={t.label} t={t} />)}
      <div className="ml-auto mr-[12px] mt-[14px] flex h-[26px] w-[61px] items-center justify-center rounded-[7px] bg-[#bb1f2b] text-white">
        <Fit className="w-[33px] text-[12.500px] font-semibold">Leave</Fit>
      </div>
    </footer>
  );
}

export default function App() {
  return (
    <div className={`flex h-[1080px] w-[1920px] flex-col overflow-hidden bg-[#fefefe] ${SANS}`}>
      <Header />
      <main className="flex h-[936px] shrink-0">
        <aside className="flex w-[427px] flex-col pl-[63px] pt-[4px]">
          {cards.map((c) => (
            <div key={c.title} className={`w-[348px] shrink-0 rounded-[15px] border border-[#b4b4b4] bg-white ${c.cls}`}>
              <Fit className={`font-bold text-[#252423] ${c.titleCls}`}>{c.title}</Fit>
              {c.metrics.map((m) => <Metric key={m.label} m={m} />)}
            </div>
          ))}
        </aside>
        <div className="flex w-[1430px] flex-col pt-[22px]">
          <div className="ml-[14px] flex h-[74px] w-[1412px] items-center overflow-hidden border border-[#7b83cc] bg-[#434fb2] pl-[1170px] font-['DejaVu_Sans_Mono',monospace] text-[27px] tracking-[1.200px] text-white">
            <span className="whitespace-nowrap">Uttarakhand 83%</span>
          </div>
          <div className="ml-[14px] mt-[26px] flex h-[74px] w-[1410px] items-center overflow-hidden border border-[#ea9577] bg-[#e36e45] font-['DejaVu_Sans_Mono',monospace] text-[27px] tracking-[1.200px] text-[#fdf0e8]">
            <span className="-ml-[93px] whitespace-nowrap">Uttarakhand 90%</span>
          </div>
          <div className="flex">
            <MapColumn />
            <section className="ml-[16px] flex w-[645px] flex-col pt-[32px]">
              <div><ManagementTable /></div>
              <div className="mt-[7px]"><Trend d={submitted} /></div>
              <div className="mt-[5px]"><Trend d={present} /></div>
            </section>
          </div>
        </div>
      </main>
      <ReportNav />
      <MeetingBar />
    </div>
  );
}
